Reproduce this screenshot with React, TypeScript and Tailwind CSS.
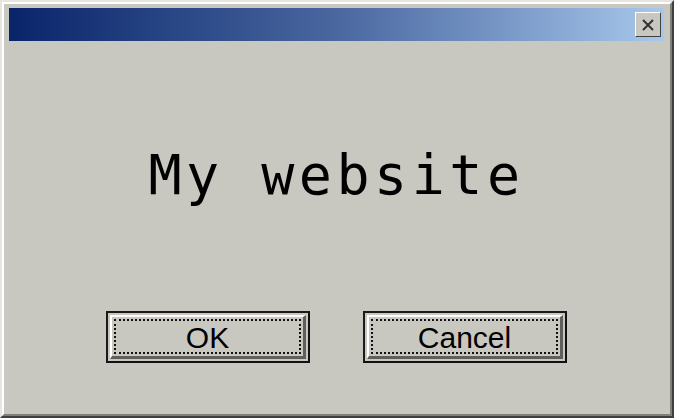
function DialogButton({ label }: { label: string }) {
  return (
    <button
      type="button"
      className="w-[204px] h-[52px] bg-[#c9c8c0] border-2 border-t-[#1a1a1a] border-l-[#1a1a1a] border-r-[#111] border-b-[#111] p-[2px]"
    >
      <div className="h-full w-full border-t-2 border-l-2 border-t-white border-l-white border-r-[3px] border-b-[3px] border-r-[#5f5f5b] border-b-[#5f5f5b] p-[2px]">
        <div className="h-full w-full border-2 border-dotted border-[#111] flex items-center justify-center pt-[3px] text-[30px] text-black font-['Liberation_Sans',Arial,sans-serif] leading-none">
          {label}
        </div>
      </div>
    </button>
  );
}

export default function App() {
  return (
    <div className="w-[674px] h-[418px] bg-[#c9c8c0] border-t-2 border-l-2 border-t-[#e6e5df] border-l-[#e6e5df] border-r-2 border-b-2 border-r-[#404040] border-b-[#404040]">
      <div className="h-full w-full border-t-2 border-l-2 border-t-white border-l-white border-r-2 border-b-2 border-r-[#7f7f7b] border-b-[#7f7f7b] pl-[5px] pr-[6px] pt-[4px] flex flex-col">
        <div className="h-[33px] flex items-center justify-end pr-[3px] bg-gradient-to-r from-[#0a246a] via-[#4a67a0] to-[#a8c8ec]">
          <button
            type="button"
            className="w-[26px] h-[25px] bg-[#c9c8c0] border border-t-white border-l-white border-r-[#404040] border-b-[#404040] flex items-center justify-center"
          >
            <svg width="14" height="14" viewBox="0 0 14 14">
              <path d="M2 2 L12 12 M12 2 L2 12" stroke="#333" strokeWidth="2" />
            </svg>
          </button>
        </div>
        <div className="flex-1 flex flex-col items-center">
          <div className="mt-[107px] text-[55px] tracking-[4.5px] leading-none text-black font-['DejaVu_Sans_Mono',monospace]">
            My website
          </div>
          <div className="mt-[108px] flex gap-[53px]">
            <DialogButton label="OK" />
            <DialogButton label="Cancel" />
          </div>
        </div>
      </div>
    </div>
  );
}
